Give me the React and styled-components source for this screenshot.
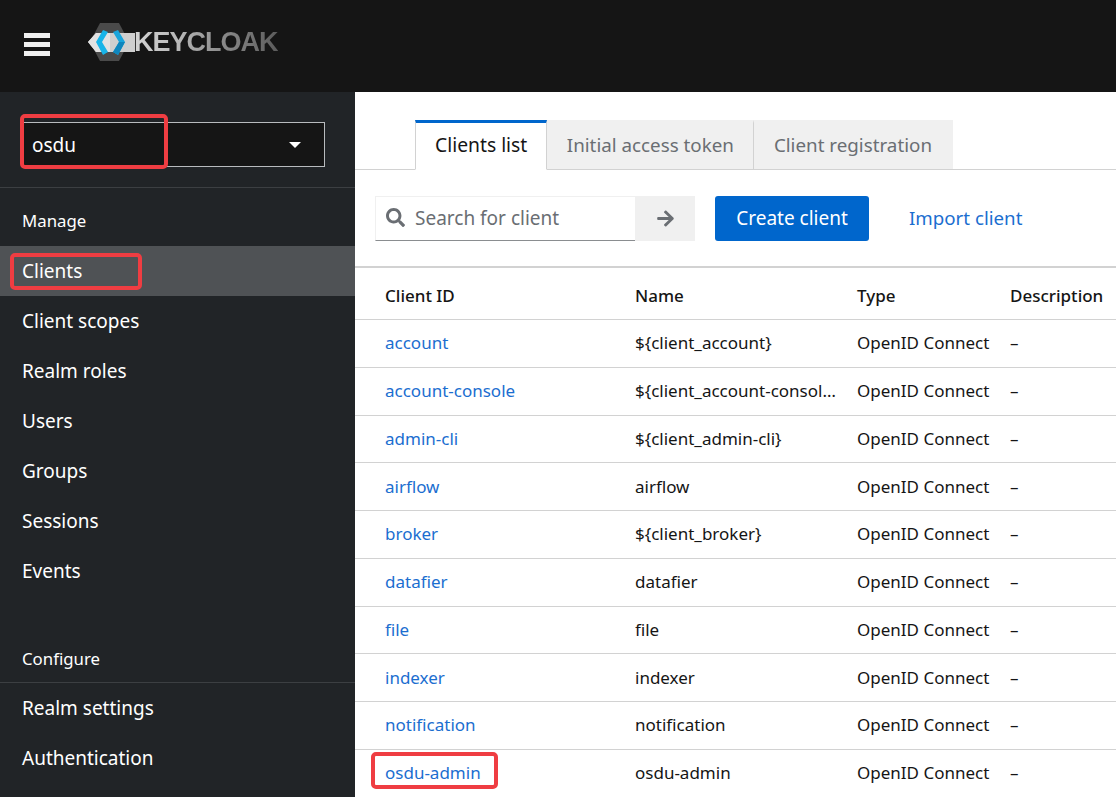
import styled, { createGlobalStyle } from 'styled-components';
import { FaSearch, FaArrowRight } from 'react-icons/fa';

const clients = [
  ['account', '${client_account}'],
  ['account-console', '${client_account-console}'],
  ['admin-cli', '${client_admin-cli}'],
  ['airflow', 'airflow'],
  ['broker', '${client_broker}'],
  ['datafier', 'datafier'],
  ['file', 'file'],
  ['indexer', 'indexer'],
  ['notification', 'notification'],
  ['osdu-admin', 'osdu-admin'],
];

const manageItems = ['Clients', 'Client scopes', 'Realm roles', 'Users', 'Groups', 'Sessions', 'Events'];

const App = () => {
  return (
    <Page>
      <GlobalStyle />
      <TopBar>
        <Burger>
          <span />
          <span />
          <span />
        </Burger>
        <Logo>
          <svg width="47" height="38" viewBox="0 0 47 38">
            <polygon points="12,0 31,0 41,19 31,38 12,38 2,19" fill="#4a4a4a" />
            <polygon points="8,10 47,10 47,29 8,29 0,19" fill="#cfcfcf" />
            <polygon points="8,10 22,10 22,29 8,29 0,19" fill="#e2e2e2" />
            <polygon points="8,19 15,7 20,9 14,19 20,29 15,32" fill="#18b4e8" />
            <polygon points="37,19 30,7 25,9 31,19 25,29 30,32" fill="#18a5dc" />
            <polygon points="37,19 30,32 25,29 31,19" fill="#0f86bd" />
          </svg>
          <LogoText>KEYCLOAK</LogoText>
        </Logo>
      </TopBar>
      <Body>
        <Sidebar>
          <RealmArea>
            <RealmSelect>
              <span>osdu</span>
              <Caret />
            </RealmSelect>
            <RedBox $left={20} $top={22} $width={148} $height={55} />
          </RealmArea>
          <SectionTitle>Manage</SectionTitle>
          <NavList>
            {manageItems.map((item) => (
              <NavItem key={item} $active={item === 'Clients'}>
                {item}
                {item === 'Clients' && <RedBox $left={10} $top={7} $width={132} $height={37} />}
              </NavItem>
            ))}
          </NavList>
          <SectionTitle $lower>Configure</SectionTitle>
          <NavList>
            <NavItem>Realm settings</NavItem>
            <NavItem>Authentication</NavItem>
          </NavList>
        </Sidebar>
        <Main>
          <Tabs>
            <Tab $active>Clients list</Tab>
            <Tab>Initial access token</Tab>
            <Tab>Client registration</Tab>
          </Tabs>
          <Toolbar>
            <SearchBox>
              <FaSearch />
              <span>Search for client</span>
            </SearchBox>
            <ArrowButton>
              <FaArrowRight />
            </ArrowButton>
            <CreateButton>Create client</CreateButton>
            <ImportLink>Import client</ImportLink>
          </Toolbar>
          <Table>
            <colgroup>
              <col style={{ width: 280 }} />
              <col style={{ width: 222 }} />
              <col style={{ width: 153 }} />
              <col />
            </colgroup>
            <thead>
              <tr>
                <Th>Client ID</Th>
                <Th>Name</Th>
                <Th>Type</Th>
                <Th>Description</Th>
              </tr>
            </thead>
            <tbody>
              {clients.map(([id, name]) => (
                <tr key={id}>
                  <Td>
                    <ClientLink>
                      {id}
                      {id === 'osdu-admin' && <RedBox $left={-14} $top={-9} $width={127} $height={37} />}
                    </ClientLink>
                  </Td>
                  <Td><NameText>{name}</NameText></Td>
                  <Td>OpenID Connect</Td>
                  <Td>–</Td>
                </tr>
              ))}
            </tbody>
          </Table>
        </Main>
      </Body>
    </Page>
  );
};

export default App;

const GlobalStyle = createGlobalStyle`
  html, body {
    margin: 0;
    height: 100%;
    overflow: hidden;
    background: #fff;
  }
`;

const Page = styled.div`
  width: 1116px;
  height: 797px;
  overflow: hidden;
  display: flex;
  flex-direction: column;
  font-family: "Noto Sans", "Liberation Sans", sans-serif;
  font-size: 18px;
  color: #151515;
`;

const TopBar = styled.header`
  height: 92px;
  flex-shrink: 0;
  background: #151515;
  display: flex;
  align-items: center;
  padding-left: 24px;
  box-sizing: border-box;
`;

const Burger = styled.div`
  width: 26px;
  display: flex;
  flex-direction: column;
  gap: 4px;
  margin: 0 38px 4px 0;

  span {
    display: block;
    height: 5px;
    background: #f0f0f0;
  }
`;

const Logo = styled.div`
  display: flex;
  align-items: center;
  margin-bottom: 8px;
`;

const LogoText = styled.span`
  font-family: "Liberation Sans", sans-serif;
  font-weight: 700;
  font-size: 27px;
  letter-spacing: -1px;
  margin-left: -1px;
  background: linear-gradient(90deg, #d4d4d4 0%, #b8b8b8 30%, #8c8c8c 60%, #5c5c5c 100%);
  -webkit-background-clip: text;
  background-clip: text;
  color: transparent;
`;

const Body = styled.div`
  flex: 1;
  display: flex;
  min-height: 0;
`;

const Sidebar = styled.aside`
  width: 355px;
  flex-shrink: 0;
  background: #212427;
  color: #fff;
`;

const RealmArea = styled.div`
  position: relative;
  padding: 30px 30px 20px 22px;
  border-bottom: 1px solid #3c3f42;
`;

const RealmSelect = styled.div`
  height: 45px;
  box-sizing: border-box;
  background: #151515;
  border: 1px solid #b8bbbe;
  display: flex;
  align-items: center;
  justify-content: space-between;
  padding: 0 23px 0 9px;
  font-size: 19px;
`;

const Caret = styled.i`
  width: 0;
  height: 0;
  border-left: 6px solid transparent;
  border-right: 6px solid transparent;
  border-top: 6px solid #fff;
`;

const RedBox = styled.div`
  position: absolute;
  left: ${(p) => p.$left}px;
  top: ${(p) => p.$top}px;
  width: ${(p) => p.$width}px;
  height: ${(p) => p.$height}px;
  box-sizing: border-box;
  border: 4px solid #ef3d42;
  border-radius: 5px;
  pointer-events: none;
`;

const SectionTitle = styled.div`
  font-size: 16.8px;
  line-height: 24px;
  padding: ${(p) => (p.$lower ? '51px 22px 11px' : '21px 22px 13px')};
  border-bottom: ${(p) => (p.$lower ? '1px solid #3c3f42' : 'none')};
`;

const NavList = styled.nav`
  display: flex;
  flex-direction: column;
`;

const NavItem = styled.a`
  position: relative;
  height: 50px;
  display: flex;
  align-items: center;
  padding-left: 22px;
  font-size: 19px;
  background: ${(p) => (p.$active ? '#4f5255' : 'transparent')};
`;

const Main = styled.main`
  flex: 1;
  min-width: 0;
  background: #fff;
`;

const Tabs = styled.div`
  margin-top: 28px;
  height: 50px;
  box-sizing: border-box;
  padding-left: 60px;
  display: flex;
  border-bottom: 1px solid #d2d2d2;
`;

const Tab = styled.div`
  height: 50px;
  box-sizing: border-box;
  display: flex;
  align-items: center;
  padding: ${(p) => (p.$active ? '0 19px 3px 19px' : '0 19.5px 3px 19.5px')};
  font-size: ${(p) => (p.$active ? '19.3px' : '18.8px')};
  color: ${(p) => (p.$active ? '#151515' : '#6a6e73')};
  background: ${(p) => (p.$active ? '#fff' : '#f0f0f0')};
  border-top: 3px solid ${(p) => (p.$active ? '#06c' : '#f0f0f0')};
  border-right: 1px solid #d2d2d2;
  border-left: ${(p) => (p.$active ? '1px solid #d2d2d2' : 'none')};
  border-bottom: ${(p) => (p.$active ? '1px solid #fff' : '1px solid #d2d2d2')};

  &:last-child {
    padding-right: 20.5px;
    border-right: none;
  }
`;

const Toolbar = styled.div`
  display: flex;
  align-items: center;
  height: 45px;
  margin: 26px 0 25px;
  padding-left: 20px;
`;

const SearchBox = styled.div`
  width: 260px;
  height: 45px;
  box-sizing: border-box;
  display: flex;
  align-items: center;
  gap: 10px;
  padding: 0 0 2px 10px;
  border-top: 1px solid #f0f0f0;
  border-left: 1px solid #f0f0f0;
  border-bottom: 1px solid #8a8d90;
  color: #6a6e73;
  font-size: 19px;

  svg {
    font-size: 19px;
  }
`;

const ArrowButton = styled.div`
  width: 60px;
  height: 45px;
  background: #f0f0f0;
  color: #6a6e73;
  font-size: 19px;
  display: flex;
  align-items: center;
  justify-content: center;
`;

const CreateButton = styled.button`
  margin-left: 20px;
  width: 154px;
  height: 45px;
  padding: 0 0 2px;
  border: none;
  border-radius: 3px;
  background: #06c;
  color: #fff;
  font: inherit;
  font-size: 19px;
`;

const ImportLink = styled.a`
  margin: 0 0 2px 40px;
  color: #1b6ed0;
  font-size: 18.7px;
`;

const Table = styled.table`
  width: 100%;
  table-layout: fixed;
  border-collapse: collapse;
  border-top: 2px solid #d2d2d2;
`;

const Th = styled.th`
  height: 47px;
  padding: 4px 0 0 30px;
  box-sizing: content-box;
  text-align: left;
  font-size: 17px;
  font-weight: 500;
  border-bottom: 1px solid #d2d2d2;
  white-space: nowrap;

  & ~ & {
    padding-left: 0;
  }
`;

const Td = styled.td`
  height: 47.75px;
  padding: 0 0 1px 30px;
  box-sizing: border-box;
  font-size: 17px;
  border-bottom: 1px solid #d2d2d2;
  white-space: nowrap;

  & ~ & {
    padding-left: 0;
  }
`;

const ClientLink = styled.a`
  position: relative;
  display: inline-block;
  color: #1b6ed0;
`;

const NameText = styled.div`
  max-width: 203px;
  overflow: hidden;
  text-overflow: ellipsis;
`;
